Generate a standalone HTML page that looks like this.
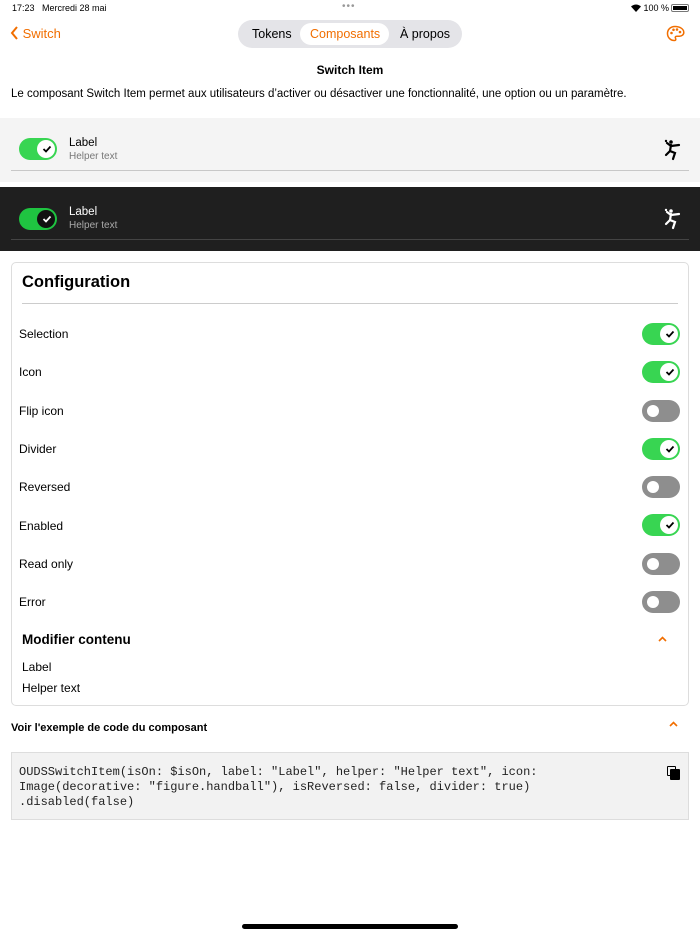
<!DOCTYPE html>
<html><head><meta charset="utf-8"><style>
*{margin:0;padding:0;box-sizing:border-box}
body{width:700px;height:934px;background:#fff;font-family:"Liberation Sans",sans-serif;color:#000;position:relative;overflow:hidden}
.a{position:absolute}
.tg{position:absolute;width:38px;height:22px;border-radius:11px;background:#38d552}
.tg .k{position:absolute;top:2px;width:18px;height:18px;border-radius:50%;background:#fff}
.tg.on .k{right:2px}
.tg.off{background:#8e8e8e}
.tg.off .k{left:2px;width:12px;height:12px;top:5px;left:5px}
.row{position:absolute;left:19px;font-size:12px}
</style></head><body>
<div class="a" style="left:12px;top:3px;font-size:9px">17:23&nbsp;&nbsp; Mercredi 28 mai</div>
<div class="a" style="left:342px;top:1px;font-size:10px;color:#999;letter-spacing:1px">•••</div>
<div class="a" style="left:631px;top:3px;font-size:9px">
<svg width="10" height="8" viewBox="0 0 10 8" style="vertical-align:-1px"><path d="M5 8L0 2.5Q5-1.5 10 2.5Z" fill="#000"/></svg> 100 %</div>
<div class="a" style="left:671px;top:4px;width:18px;height:8px;border:1px solid #777;border-radius:2px;padding:1px"><div style="background:#000;width:100%;height:100%"></div></div>
<div class="a" style="left:10px;top:26px;font-size:13px;color:#f16e00">
<svg width="9" height="14" viewBox="0 0 9 14" style="vertical-align:-2px"><path d="M7 1L2 7l5 6" stroke="#f16e00" stroke-width="2" fill="none"/></svg> Switch</div>
<div class="a" style="left:238px;top:20px;width:224px;height:28px;border-radius:14px;background:#e4e4e8"></div>
<div class="a" style="left:300px;top:23px;width:89px;height:22px;border-radius:11px;background:#fff"></div>
<div class="a" style="left:252px;top:27px;font-size:12.5px">Tokens</div>
<div class="a" style="left:310px;top:27px;font-size:12.5px;color:#f16e00">Composants</div>
<div class="a" style="left:400px;top:27px;font-size:12.5px">À propos</div>
<svg class="a" style="left:666px;top:25px" width="19" height="17" viewBox="0 0 19 17"><path d="M9 1.5C4 1.5 1.5 5 1.5 8.5S4 15.5 8.5 15.5c1.5 0 1.5-1.3 1-2.3-.6-1 0-2 1.3-2h2.5c2.5 0 4.5-1.5 4.5-3.7C17.8 4 14 1.5 9 1.5z" fill="none" stroke="#f16e00" stroke-width="1.5"/><circle cx="5.5" cy="8" r="1.3" fill="#f16e00"/><circle cx="7.5" cy="4.8" r="1.3" fill="#f16e00"/><circle cx="11" cy="4.5" r="1.3" fill="#f16e00"/><circle cx="14" cy="7" r="1.3" fill="#f16e00"/></svg>
<div class="a" style="left:0;width:700px;top:63px;text-align:center;font-size:12px;font-weight:bold">Switch Item</div>
<div class="a" style="left:11px;top:88px;font-size:11.5px">Le composant Switch Item permet aux utilisateurs d’activer ou désactiver une fonctionnalité, une option ou un paramètre.</div>

<div class="a" style="left:0;top:118px;width:700px;height:64px;background:#f4f4f4"></div>
<div class="tg on" style="left:19px;top:138px"><div class="k"></div><svg class="a" style="left:23px;top:6px" width="10" height="10" viewBox="0 0 10 10"><path d="M1.5 5l2.5 2.5 4.5-5" stroke="#000" stroke-width="1.8" fill="none"/></svg></div>
<div class="a" style="left:69px;top:137px;font-size:11.5px">Label</div>
<div class="a" style="left:69px;top:151px;font-size:10px;color:#777">Helper text</div>
<svg class="a" style="left:662px;top:139px" width="20" height="22" viewBox="0 0 20 22"><g stroke="#000" stroke-width="2.2" stroke-linecap="round" fill="none"><path d="M9 6l-1 6 5 2-2 6"/><path d="M8 12l-4 4"/><path d="M9 7l8-1"/><path d="M9 7L5 4"/></g><circle cx="9" cy="3" r="1.8" fill="#000"/><circle cx="4" cy="2" r="1.2" fill="#000"/></svg>
<div class="a" style="left:11px;top:170px;width:678px;height:1px;background:#c8c8c8"></div>

<div class="a" style="left:0;top:187px;width:700px;height:64px;background:#1f1f1f"></div>
<div class="tg on" style="left:19px;top:208px;background:#1fc441"><div class="k" style="background:#111"></div><svg class="a" style="left:23px;top:6px" width="10" height="10" viewBox="0 0 10 10"><path d="M1.5 5l2.5 2.5 4.5-5" stroke="#fff" stroke-width="1.8" fill="none"/></svg></div>
<div class="a" style="left:69px;top:206px;font-size:11.5px;color:#fff">Label</div>
<div class="a" style="left:69px;top:220px;font-size:10px;color:#aaa">Helper text</div>
<svg class="a" style="left:662px;top:208px" width="20" height="22" viewBox="0 0 20 22"><g stroke="#fff" stroke-width="2.2" stroke-linecap="round" fill="none"><path d="M9 6l-1 6 5 2-2 6"/><path d="M8 12l-4 4"/><path d="M9 7l8-1"/><path d="M9 7L5 4"/></g><circle cx="9" cy="3" r="1.8" fill="#fff"/><circle cx="4" cy="2" r="1.2" fill="#fff"/></svg>
<div class="a" style="left:11px;top:239px;width:678px;height:1px;background:#444"></div>

<div class="a" style="left:11px;top:262px;width:678px;height:444px;border:1px solid #ddd;border-radius:5px"></div>
<div class="a" style="left:22px;top:273px;font-size:16.5px;font-weight:bold">Configuration</div>
<div class="a" style="left:22px;top:303px;width:656px;height:1px;background:#ccc"></div>

<div class="row" style="top:327px">Selection</div>
<div class="row" style="top:365px">Icon</div>
<div class="row" style="top:404px">Flip icon</div>
<div class="row" style="top:442px">Divider</div>
<div class="row" style="top:480px">Reversed</div>
<div class="row" style="top:519px">Enabled</div>
<div class="row" style="top:557px">Read only</div>
<div class="row" style="top:595px">Error</div>

<div class="tg on" style="left:642px;top:323px"><div class="k"></div><svg class="a" style="left:23px;top:6px" width="10" height="10" viewBox="0 0 10 10"><path d="M1.5 5l2.5 2.5 4.5-5" stroke="#000" stroke-width="1.8" fill="none"/></svg></div>
<div class="tg on" style="left:642px;top:361px"><div class="k"></div><svg class="a" style="left:23px;top:6px" width="10" height="10" viewBox="0 0 10 10"><path d="M1.5 5l2.5 2.5 4.5-5" stroke="#000" stroke-width="1.8" fill="none"/></svg></div>
<div class="tg off" style="left:642px;top:400px"><div class="k"></div></div>
<div class="tg on" style="left:642px;top:438px"><div class="k"></div><svg class="a" style="left:23px;top:6px" width="10" height="10" viewBox="0 0 10 10"><path d="M1.5 5l2.5 2.5 4.5-5" stroke="#000" stroke-width="1.8" fill="none"/></svg></div>
<div class="tg off" style="left:642px;top:476px"><div class="k"></div></div>
<div class="tg on" style="left:642px;top:514px"><div class="k"></div><svg class="a" style="left:23px;top:6px" width="10" height="10" viewBox="0 0 10 10"><path d="M1.5 5l2.5 2.5 4.5-5" stroke="#000" stroke-width="1.8" fill="none"/></svg></div>
<div class="tg off" style="left:642px;top:553px"><div class="k"></div></div>
<div class="tg off" style="left:642px;top:591px"><div class="k"></div></div>

<div class="a" style="left:22px;top:632px;font-size:13.5px;font-weight:bold">Modifier contenu</div>
<svg class="a" style="left:658px;top:636px" width="9" height="6" viewBox="0 0 9 6"><path d="M1 5l3.5-3.5L8 5" stroke="#f16e00" stroke-width="1.6" fill="none"/></svg>
<div class="a" style="left:22px;top:660px;font-size:12px">Label</div>
<div class="a" style="left:22px;top:681px;font-size:12px">Helper text</div>

<div class="a" style="left:11px;top:722px;font-size:11px;font-weight:bold">Voir l'exemple de code du composant</div>
<svg class="a" style="left:669px;top:721px" width="9" height="6" viewBox="0 0 9 6"><path d="M1 5l3.5-3.5L8 5" stroke="#f16e00" stroke-width="1.6" fill="none"/></svg>
<div class="a" style="left:11px;top:752px;width:678px;height:68px;background:#f2f2f2;border:1px solid #ddd"></div>
<pre class="a" style="left:19px;top:765px;font-family:'Liberation Mono',monospace;font-size:12px;line-height:15px;color:#222">OUDSSwitchItem(isOn: $isOn, label: "Label", helper: "Helper text", icon:
Image(decorative: "figure.handball"), isReversed: false, divider: true)
.disabled(false)</pre>
<div class="a" style="left:667px;top:766px;width:9px;height:10px;border:1.5px solid #000;border-radius:1px"></div>
<div class="a" style="left:670px;top:769px;width:10px;height:11px;background:#000;border-radius:1px"></div>

<div class="a" style="left:242px;top:924px;width:216px;height:5px;border-radius:3px;background:#000"></div>
</body></html>
